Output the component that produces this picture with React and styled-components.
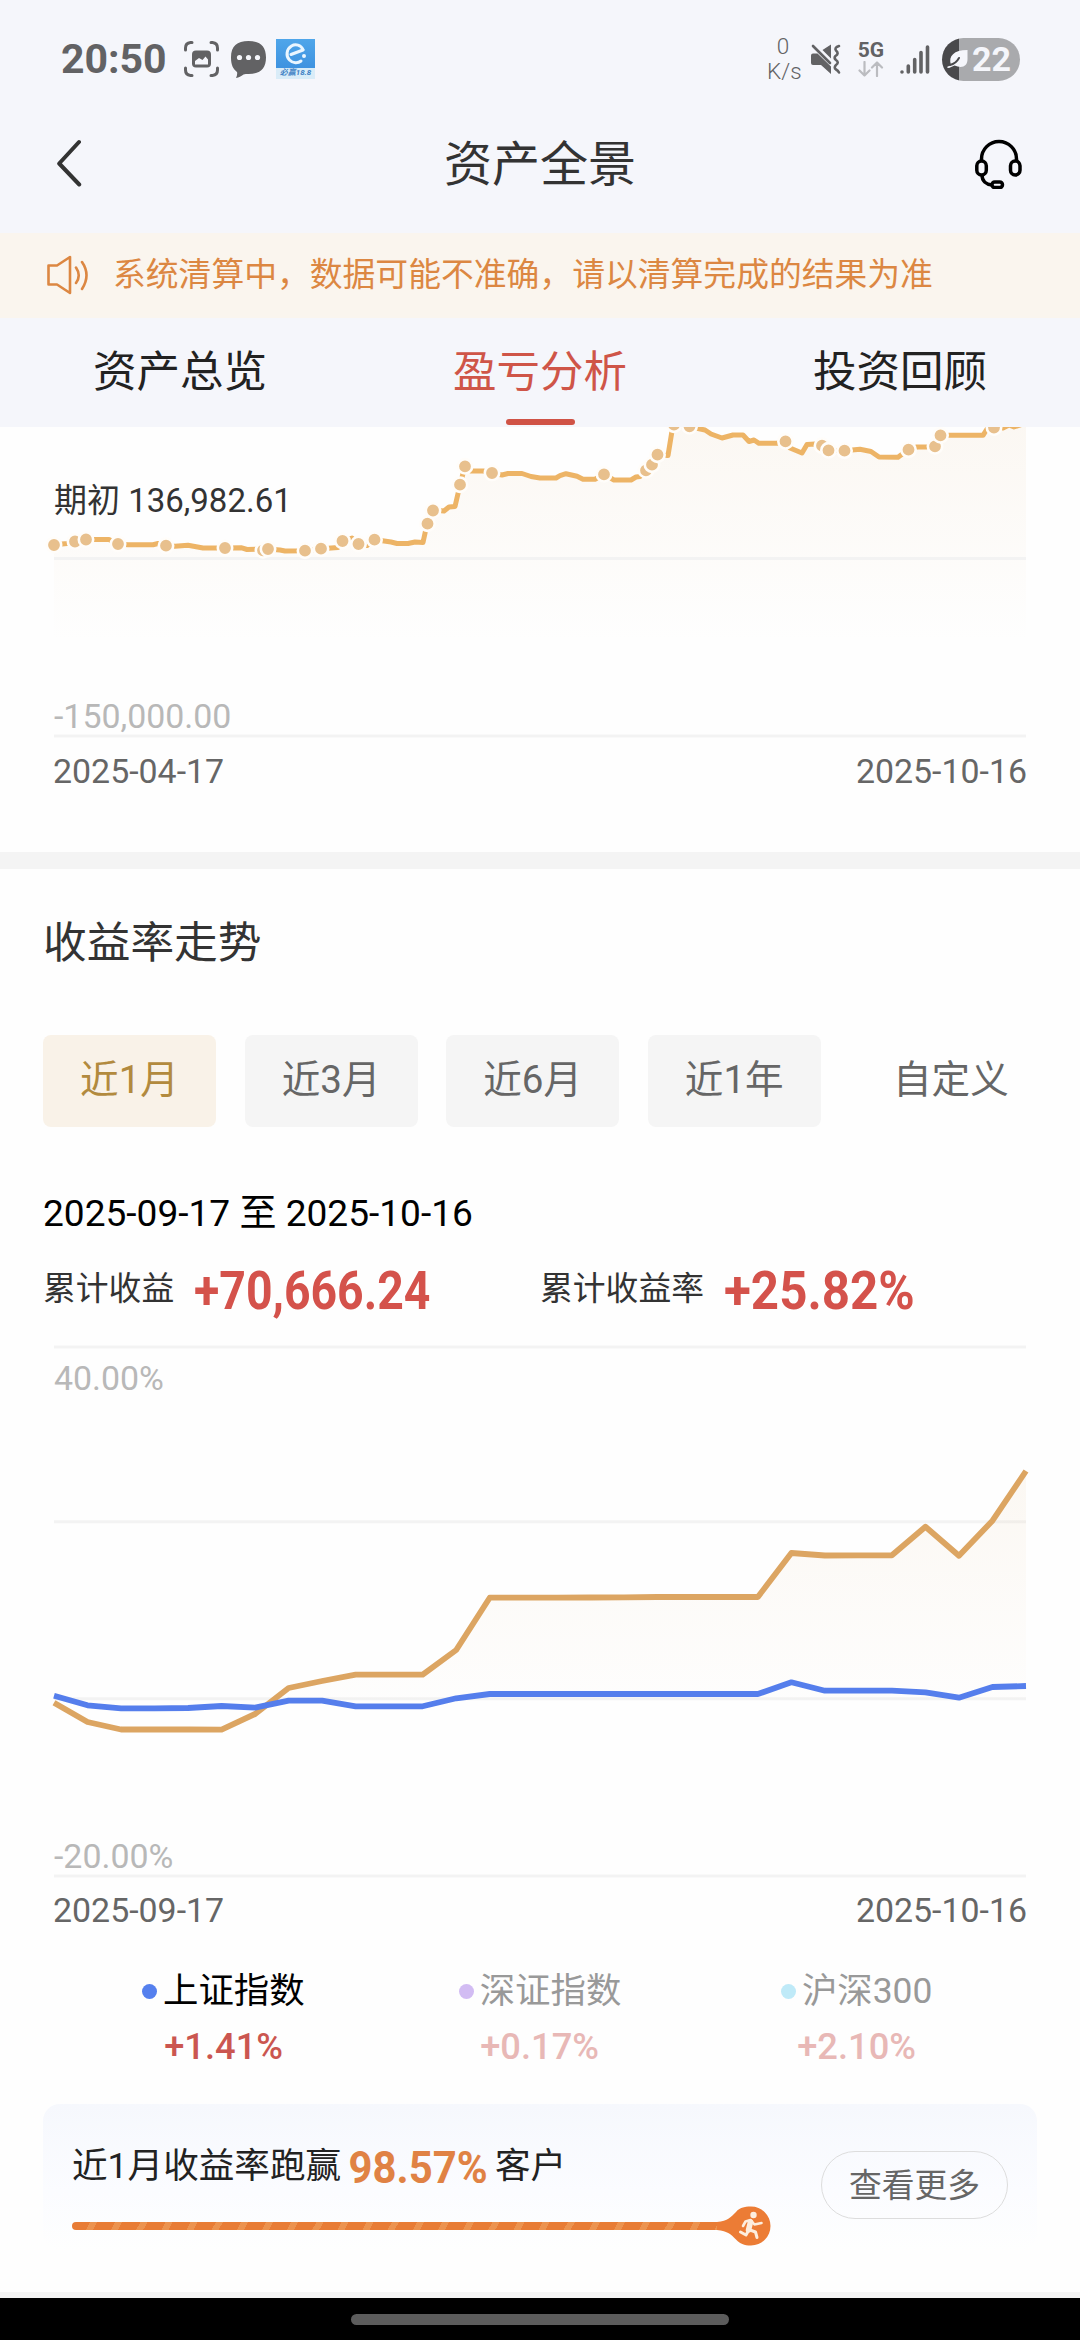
import styled, { createGlobalStyle } from "styled-components";

const GlobalStyle = createGlobalStyle`
  * {
    box-sizing: border-box;
  }
  body {
    margin: 0;
    background: #fefefe;
    font-family: Roboto, "Noto Sans CJK SC", sans-serif;
    color: #333;
  }
`;

const Screen = styled.div`
  width: 1080px;
  height: 2340px;
  overflow: hidden;
  display: flex;
  flex-direction: column;
  background: #fefefe;
  white-space: nowrap;
`;

/* ---------- status bar ---------- */

const StatusBar = styled.div`
  height: 118px;
  flex: none;
  background: #f5f6fb;
  padding: 0 60px 0 61px;
  display: flex;
  justify-content: space-between;
  align-items: center;
  color: #626264;
`;

const StatusGroup = styled.div`
  display: flex;
  align-items: center;
  svg {
    display: block;
    flex: none;
  }
  svg + svg {
    margin-left: 12px;
  }
`;

const Clock = styled.span`
  width: 123px;
  font-size: 41px;
  font-weight: 700;
  line-height: 44px;
`;

const AppBadge = styled.div`
  width: 39px;
  height: 40px;
  margin-left: 10px;
  display: flex;
  flex-direction: column;
  align-items: center;
  background: linear-gradient(#4fa6ea, #3f93e0 70%);
  span {
    width: 39px;
    height: 11px;
    background: #d9ecf8;
    color: #3c7fc4;
    font-size: 8px;
    font-weight: 700;
    font-style: italic;
    line-height: 10px;
    text-align: center;
  }
`;

const Speed = styled.div`
  width: 32px;
  margin-right: 11px;
  font-size: 22.5px;
  font-weight: 300;
  line-height: 25px;
  text-align: center;
`;

const Network = styled.div`
  width: 28px;
  margin: 0 15px 0 16px;
  display: flex;
  flex-direction: column;
  align-items: center;
  gap: 2px;
  font-size: 21px;
  font-weight: 700;
  line-height: 18px;
`;

const Battery = styled.div`
  width: 78px;
  height: 43px;
  margin-left: 12px;
  padding-left: 5px;
  border-radius: 22px;
  background: linear-gradient(90deg, #49494b 17px, #a9aaad 17px);
  color: #f5f6fb;
  display: flex;
  align-items: center;
  gap: 4px;
  font-size: 34px;
  font-weight: 700;
  line-height: 43px;
`;

/* ---------- header ---------- */

const Header = styled.header`
  height: 115px;
  flex: none;
  padding: 0 56px 23px;
  background: #f5f6fb;
  display: flex;
  justify-content: space-between;
  align-items: center;
  h1 {
    margin: 0;
    padding-top: 2px;
    font-size: 48px;
    font-weight: 400;
    line-height: 60px;
  }
`;

const IconSlot = styled.div`
  width: 50px;
  height: 50px;
  svg {
    display: block;
  }
`;

const Notice = styled.div`
  height: 85px;
  flex: none;
  padding: 0 46px 1px;
  display: flex;
  align-items: center;
  gap: 24px;
  background: #faf5ee;
  color: #dc8742;
  font-size: 32.8px;
  line-height: 48px;
`;

const Tabs = styled.nav`
  height: 109px;
  flex: none;
  display: flex;
  background: #f5f6fb;
`;

const Tab = styled.div`
  flex: 1;
  display: flex;
  flex-direction: column;
  align-items: center;
  justify-content: space-between;
  padding: 25px 0 2px;
  font-size: 43.5px;
  line-height: 60px;
  color: ${(p) => (p.$active ? "#cf5548" : "#222")};
  &::after {
    content: "";
    width: 69px;
    height: 6px;
    border-radius: 3px;
    background: ${(p) => (p.$active ? "#d05346" : "transparent")};
  }
`;

/* ---------- charts ---------- */

const ChartBox = styled.div`
  position: relative;
  height: ${(p) => p.$height}px;
  flex: none;
  svg {
    display: block;
  }
`;

const AxisLabel = styled.span`
  position: absolute;
  left: 54px;
  top: ${(p) => p.$top}px;
  font-size: ${(p) => (p.$dark ? 33 : 33.9)}px;
  line-height: 40px;
  color: ${(p) => (p.$dark ? "#333" : "#b8b8b8")};
`;

const DateAxis = styled.div`
  flex: none;
  height: ${(p) => p.$height}px;
  padding: 13px 53px 0;
  display: flex;
  justify-content: space-between;
  font-size: 33.9px;
  line-height: 40px;
  color: #666;
`;

const Divider = styled.div`
  height: ${(p) => p.$height}px;
  flex: none;
  background: #f4f4f4;
`;

/* ---------- yield section ---------- */

const SectionTitle = styled.h2`
  margin: 0;
  padding: 44px 43px 0;
  height: 166px;
  flex: none;
  font-size: 43.7px;
  font-weight: 400;
  line-height: 60px;
`;

const Periods = styled.div`
  display: flex;
  flex: none;
  gap: 28.6px;
  padding-left: 43px;
`;

const Period = styled.div`
  width: ${(p) => (p.$wide ? 203 : 173)}px;
  height: 92px;
  border-radius: 8px;
  font-size: 38.6px;
  line-height: 90px;
  text-align: center;
  background: ${(p) => (p.$wide ? "transparent" : p.$active ? "#f9f2e8" : "#f5f5f5")};
  color: ${(p) => (p.$active ? "#b28a3e" : "#666")};
`;

const Range = styled.div`
  flex: none;
  height: 134px;
  padding: 64px 43px 0;
  font-size: 37.1px;
  line-height: 46px;
  color: #000;
`;

const Totals = styled.div`
  flex: none;
  height: 84px;
  padding-left: 43px;
  display: flex;
`;

const Total = styled.div`
  width: 497px;
  display: flex;
  gap: 20px;
  font-size: 32.8px;
  line-height: 57px;
  strong {
    width: 0;
    padding-top: 2px;
    font-size: 53px;
    font-weight: 700;
    color: #d4524b;
    transform: scaleX(${(p) => p.$stretch});
    transform-origin: 0 0;
  }
`;

const Legend = styled.div`
  flex: none;
  height: 139px;
  padding: 0 65px;
  display: flex;
`;

const LegendItem = styled.div`
  flex: 1;
  display: flex;
  flex-direction: column;
  align-items: center;
  color: ${(p) => (p.$active ? "#000" : "#999")};
  b {
    padding-top: 8px;
    font-size: 37px;
    font-weight: 500;
    line-height: 44px;
    color: ${(p) => (p.$active ? "#cb5650" : "#e8b8b6")};
    transform: scaleX(0.98);
  }
`;

const LegendName = styled.div`
  display: flex;
  align-items: center;
  gap: 6px;
  font-size: 35.4px;
  line-height: 52px;
  &::before {
    content: "";
    width: 15px;
    height: 15px;
    margin-top: 1px;
    border-radius: 50%;
    background: ${(p) => p.$dot};
  }
`;

/* ---------- ranking card ---------- */

const RankCard = styled.div`
  flex: none;
  height: 146px;
  margin: 0 43px 42px;
  padding: 35px 29px 0;
  border-radius: 17px;
  background: linear-gradient(#f6f8fd, #fbfcff 60%, #fefefe);
  display: flex;
  justify-content: space-between;
  align-items: flex-start;
`;

const RankText = styled.p`
  margin: 0;
  height: 64px;
  display: flex;
  font-size: 35.6px;
  line-height: 54px;
  color: #222;
  strong {
    width: 155px;
    padding: 2px 0 0 8px;
    font-size: 44px;
    font-weight: 700;
    color: #e08244;
    transform: scaleX(0.95);
    transform-origin: 0 0;
  }
  span {
    margin-left: -1px;
  }
`;

const Progress = styled.div`
  display: flex;
  align-items: center;
  height: 46px;
`;

const Track = styled.div`
  width: 645px;
  height: 8px;
  border-radius: 4px 0 0 4px;
  background: repeating-linear-gradient(
    118deg,
    #e87c35 0 16px,
    #ec934f 16px 22.2px
  );
`;

const MoreButton = styled.button`
  width: 187px;
  height: 68px;
  margin-top: 12px;
  padding: 0 0 5px;
  border: 1px solid #ddd;
  border-radius: 34px;
  background: transparent;
  font: inherit;
  font-size: 32.8px;
  color: #666;
`;

const NavBar = styled.div`
  flex: none;
  height: 42px;
  padding-top: 16px;
  background: #000;
  display: flex;
  justify-content: center;
  align-items: flex-start;
  &::after {
    content: "";
    width: 378px;
    height: 11px;
    border-radius: 6px;
    background: #5c5c5c;
  }
`;

const assetLine = [
  [54, 118], [62, 117], [67, 116.5], [75, 114.5], [86, 112.5], [109, 112.5],
  [118, 117], [128, 117.7], [153, 117.7], [158, 116.5], [166, 118.5],
  [175, 119.3], [188, 118.3], [203, 121], [225, 121], [241, 120.7],
  [247, 122.5], [268, 122], [280, 123], [285, 124], [305, 123.7],
  [321, 121.7], [338, 120.5], [343, 114], [352, 111], [358, 117],
  [367, 118.5], [374, 112.5], [391, 115], [397, 116.5], [408, 116.5],
  [415, 115], [423, 115.5], [427, 97], [433, 83], [444, 84], [449, 80],
  [455, 79.5], [460, 58], [465, 39], [471, 44], [483, 44], [492, 46],
  [502, 48], [508, 46.5], [522, 46.5], [531, 49.5], [540, 51], [556, 51],
  [560, 48.7], [566, 46.7], [577, 49.3], [583, 52.3], [595, 52.3],
  [604, 47.3], [614, 53], [631, 53], [636, 50], [640, 49.5], [646, 43],
  [652, 38], [657, 28], [668, 28.5], [672, 4], [674, -2], [689, -0.5],
  [705, 3], [711, 7], [722, 11], [733, 8], [743, 8], [749, 14.5], [754, 13],
  [759, 16.3], [777, 16.3], [785, 14.3], [790, 21], [802, 26], [807, 17.5],
  [815, 17], [822, 18.7], [828, 23.3], [844, 23.7], [860, 22.3], [871, 24.5],
  [879, 30], [898, 30.3], [908, 22.7], [917, 20], [930, 20], [935, 19.3],
  [940, 8.3], [983, 8.3], [987, 2], [994, 1], [1003, 1], [1009, -2],
  [1014, 0], [1026, -4],
];

const assetDots = [
  [54, 118], [75, 114.5], [86, 112.5], [118, 117], [166, 118.7], [225, 121],
  [263, 123.3], [268, 122], [305, 123.7], [321, 121.7], [342.5, 114],
  [358.5, 117], [374.5, 112.7], [427.5, 96.7], [433, 83.5], [460, 57.7],
  [465, 39.3], [492, 46], [604, 47.3], [646, 43.3], [652, 37.7],
  [657.5, 27.7], [674, -2.3], [689.5, -0.7], [785.5, 14.3], [822, 18.7],
  [828.5, 23.3], [844.5, 23.7], [908.5, 22.7], [935, 19.3], [940.5, 8.3],
  [994, 0.5],
];

const yieldLine = [
  357.7, 377, 384.5, 384.5, 384.5, 384.7, 369, 343, 336, 329.7, 329.7, 329.7,
  305, 252.7, 252.7, 252.7, 252.5, 252.3, 252, 252, 252, 252, 208, 210.5,
  210.3, 210.3, 181.7, 210.7, 175.7, 126,
];

const indexLine = [
  350.7, 360.3, 363.3, 363.3, 363, 361, 362.7, 355.7, 355.7, 361.3, 361.3,
  361.3, 353.3, 349, 349, 349, 349, 349, 349, 349, 349, 349, 337.3, 345.7,
  345.7, 345.7, 347.3, 352.7, 342, 341,
];

const periods = ["近1月", "近3月", "近6月", "近1年", "自定义"];

const indexes = [
  { name: "上证指数", value: "+1.41%", dot: "#5580ee" },
  { name: "深证指数", value: "+0.17%", dot: "#d2bcf3" },
  { name: "沪深300", value: "+2.10%", dot: "#bfeaf8" },
];

const byDay = (values) => values.map((y, i) => [54 + (i * 972) / 29, y]);
const toPoints = (points) => points.map((p) => p.join(",")).join(" ");

const GridLines = ({ rows }) =>
  rows.map((y) => (
    <line key={y} x1="54" x2="1026" y1={y} y2={y} stroke="#f3f3f3" strokeWidth="3" />
  ));

const AssetChart = () => (
  <svg width="1080" height="312" viewBox="0 0 1080 312">
    <defs>
      <linearGradient id="assetFill" gradientUnits="userSpaceOnUse" x1="0" y1="0" x2="0" y2="215">
        <stop offset="0" stopColor="#dcae70" stopOpacity="0.08" />
        <stop offset="1" stopColor="#dcae70" stopOpacity="0" />
      </linearGradient>
    </defs>
    <polygon points={`54,215 ${toPoints(assetLine)} 1026,215`} fill="url(#assetFill)" />
    <GridLines rows={[131.5, 309]} />
    <polyline
      points={toPoints(assetLine)}
      fill="none"
      stroke="#edb466"
      strokeWidth="5"
      strokeLinejoin="round"
    />
    {assetDots.map(([x, y]) => (
      <circle key={x} cx={x} cy={y} r="7.2" fill="#e8c08d" stroke="#fffdfa" strokeWidth="2.6" />
    ))}
  </svg>
);

const YieldChart = () => (
  <svg width="1080" height="533" viewBox="0 0 1080 533">
    <defs>
      <linearGradient id="yieldFill" gradientUnits="userSpaceOnUse" x1="0" y1="126" x2="0" y2="354">
        <stop offset="0" stopColor="#dcae70" stopOpacity="0.08" />
        <stop offset="1" stopColor="#dcae70" stopOpacity="0.01" />
      </linearGradient>
    </defs>
    <GridLines rows={[2, 176.7, 353.8, 531]} />
    <polygon points={`288,354 ${toPoints(byDay(yieldLine).slice(7))} 1026,354`} fill="url(#yieldFill)" />
    <polyline
      points={toPoints(byDay(yieldLine))}
      fill="none"
      stroke="#dca562"
      strokeWidth="5.8"
      strokeLinejoin="round"
    />
    <polyline
      points={toPoints(byDay(indexLine))}
      fill="none"
      stroke="#557eec"
      strokeWidth="5.8"
      strokeLinejoin="round"
    />
  </svg>
);

const ScreenshotIcon = () => (
  <svg width="35" height="36" viewBox="0 0 35 36" fill="none" stroke="currentColor" strokeWidth="3" strokeLinecap="round">
    <path d="M1.5 9V7q0-5 5-5.500H8M27 1.500h1.500q5 .5 5 5.500v2M1.500 27v2q0 5 5 5.500H8M27 34.500h1.500q5-.5 5-5.500v-2" />
    <rect x="8" y="9.500" width="19" height="17" rx="4" fill="currentColor" stroke="none" />
    <path d="M11 23.500v-3.500l4-3 3.500 2 3-3.500 2.500 3v5z" fill="#f5f6fb" stroke="none" />
  </svg>
);

const ChatIcon = () => (
  <svg width="35" height="37" viewBox="0 0 35 37">
    <path
      d="M17.500 0C29 0 35 5 35 16.500S29 33 17.500 33c-2 0-3.500 0-5 .4C10 35 8 36.500 5 37c1-2 1.500-4 1-6C2 28 0 24 0 16.500 0 5 6 0 17.500 0z"
      fill="currentColor"
    />
    <g fill="#f5f6fb">
      <circle cx="8.500" cy="16.500" r="2.600" />
      <circle cx="17.500" cy="16.500" r="2.600" />
      <circle cx="26.500" cy="16.500" r="2.600" />
    </g>
  </svg>
);

const AppLogo = () => (
  <svg width="39" height="29" viewBox="0 0 39 29" fill="none" stroke="#eaf6ff" strokeWidth="3" strokeLinecap="round">
    <path d="M27 10.500C25 6 19.500 4.500 15.500 7c-5 3-6 10-2 14 3.500 3.500 8.500 3.500 11.500 1" />
    <path d="M15 15.500l12-4.500" />
    <circle cx="28" cy="17" r="1" strokeWidth="2" />
  </svg>
);

const MuteIcon = () => (
  <svg width="31" height="31" viewBox="0 0 31 31" fill="currentColor">
    <path d="M1 11.500q0-2 2-2h4.500L21 22.500V30L11 21H3q-2 0-2-2zM12.500 6L21 .5v14z" />
    <path
      d="M3 2l17 17M29 2q-5 1.500-3 4.500 3.500 3-.5 5.500-2 2 .5 4 3.500 2.500 0 5-2.500 2.500 0 4.500 2 1 3 3"
      fill="none"
      stroke="currentColor"
      strokeWidth="2.600"
      strokeLinecap="round"
    />
  </svg>
);

const DataArrows = () => (
  <svg width="26" height="16" viewBox="0 0 26 16" fill="none" stroke="#bbbcc0" strokeWidth="2.200" strokeLinecap="round" strokeLinejoin="round">
    <path d="M6.500 1v13.500M1.500 9.500l5 5 5-5M19 15V1.500M14 6.500l5-5 5 5" />
  </svg>
);

const SignalIcon = () => (
  <svg width="30" height="30" viewBox="0 0 30 30" stroke="currentColor" strokeWidth="3.600" strokeLinecap="round">
    <path d="M2 28v0M8.300 22v6M14.700 15.500V28M21 8.500V28M27.500 3V28" />
  </svg>
);

const LeafIcon = () => (
  <svg width="21" height="22" viewBox="0 0 21 22">
    <path d="M20.500 2v9c0 8-6 9.500-13 6.500L2 20q-2 0-2-1l4-2C1 8 7 2 20.500 2z" fill="#f5f6fb" />
    <path d="M3 17q6-1.500 9-7" stroke="#49494b" strokeWidth="2" strokeLinecap="round" fill="none" />
  </svg>
);

const BackIcon = () => (
  <svg width="28" height="48" viewBox="0 0 28 48">
    <path d="M23 3L3.200 24.500l20 21" fill="none" stroke="#333" strokeWidth="4" strokeLinecap="round" strokeLinejoin="round" />
  </svg>
);

const HeadsetIcon = () => (
  <svg width="50" height="50" viewBox="0 0 50 50" fill="none" stroke="#000" strokeWidth="3.500">
    <path d="M7.500 22v-2a17.500 17.500 0 0 1 35 0v2" />
    <rect x="2.800" y="22" width="9.500" height="14" rx="4.700" />
    <rect x="36.500" y="22" width="9.500" height="14" rx="4.700" />
    <path d="M8 36c0 6 4 9.500 10 10" />
    <rect x="18" y="43" width="10.500" height="5.500" rx="2.700" />
  </svg>
);

const SpeakerIcon = () => (
  <svg width="43" height="40" viewBox="0 0 43 40" fill="none" stroke="currentColor" strokeWidth="2.600" strokeLinecap="round" strokeLinejoin="round">
    <path d="M2.500 10.500h8.500L24 2v36L11 29.500H2.500zM30 12.500q5.500 8 0 15.500M36 7q9 13 0 27" />
  </svg>
);

const RunnerKnob = () => (
  <svg width="54" height="40" viewBox="0 0 54 40">
    <path d="M0 16c11-1 14-5 19-10 3-4 8-5.500 15-5.500a19.500 19.500 0 0 1 0 39c-7 0-11-2-15-6C14 28.500 11 25 0 24z" fill="#ec7c35" />
    <circle cx="36.500" cy="9" r="3.200" fill="#fdeede" />
    <g fill="none" stroke="#fdeede" strokeLinecap="round" strokeLinejoin="round">
      <path d="M26 20l2.500-4.500 5-1.500 4 4.500 7-1.500" strokeWidth="2.600" />
      <path d="M33.500 16l-2 8" strokeWidth="5.500" />
      <path d="M31.500 24.500l-2.500 4.500-5.500-3M33 24l5.500 2 1.500 5.500" strokeWidth="3" />
    </g>
  </svg>
);

const App = () => {
  return (
    <Screen>
      <GlobalStyle />
      <StatusBar>
        <StatusGroup>
          <Clock>20:50</Clock>
          <ScreenshotIcon />
          <ChatIcon />
          <AppBadge>
            <AppLogo />
            <span>必赢18.8</span>
          </AppBadge>
        </StatusGroup>
        <StatusGroup>
          <Speed>
            0<br />
            K/s
          </Speed>
          <MuteIcon />
          <Network>
            5G
            <DataArrows />
          </Network>
          <SignalIcon />
          <Battery>
            <LeafIcon />
            22
          </Battery>
        </StatusGroup>
      </StatusBar>
      <Header>
        <IconSlot>
          <BackIcon />
        </IconSlot>
        <h1>资产全景</h1>
        <IconSlot>
          <HeadsetIcon />
        </IconSlot>
      </Header>
      <Notice>
        <SpeakerIcon />
        系统清算中，数据可能不准确，请以清算完成的结果为准
      </Notice>
      <Tabs>
        <Tab>资产总览</Tab>
        <Tab $active>盈亏分析</Tab>
        <Tab>投资回顾</Tab>
      </Tabs>

      <ChartBox $height={312}>
        <AssetChart />
        <AxisLabel $top={54} $dark>
          期初 136,982.61
        </AxisLabel>
        <AxisLabel $top={270}>-150,000.00</AxisLabel>
      </ChartBox>
      <DateAxis $height={113}>
        <span>2025-04-17</span>
        <span>2025-10-16</span>
      </DateAxis>
      <Divider $height={17} />

      <SectionTitle>收益率走势</SectionTitle>
      <Periods>
        {periods.map((label, i) => (
          <Period key={label} $active={i === 0} $wide={i === 4}>
            {label}
          </Period>
        ))}
      </Periods>
      <Range>2025-09-17 至 2025-10-16</Range>
      <Totals>
        <Total $stretch={0.875}>
          累计收益<strong>+70,666.24</strong>
        </Total>
        <Total $stretch={0.93}>
          累计收益率<strong>+25.82%</strong>
        </Total>
      </Totals>
      <ChartBox $height={533}>
        <YieldChart />
        <AxisLabel $top={14}>40.00%</AxisLabel>
        <AxisLabel $top={492}>-20.00%</AxisLabel>
      </ChartBox>
      <DateAxis $height={87}>
        <span>2025-09-17</span>
        <span>2025-10-16</span>
      </DateAxis>
      <Legend>
        {indexes.map((item, i) => (
          <LegendItem key={item.name} $active={i === 0}>
            <LegendName $dot={item.dot}>{item.name}</LegendName>
            <b>{item.value}</b>
          </LegendItem>
        ))}
      </Legend>

      <RankCard>
        <div>
          <RankText>
            近1月收益率跑赢<strong>98.57%</strong>
            <span>客户</span>
          </RankText>
          <Progress>
            <Track />
            <RunnerKnob />
          </Progress>
        </div>
        <MoreButton>查看更多</MoreButton>
      </RankCard>
      <Divider $height={6} />
      <NavBar />
    </Screen>
  );
};

export default App;
